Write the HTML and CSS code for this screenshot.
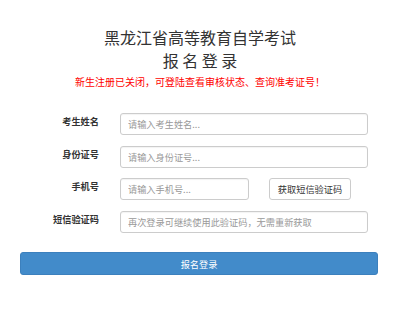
FILE: index.html
```html
<!DOCTYPE html>
<html lang="zh-CN">
<head>
<meta charset="utf-8">
<title>报名登录</title>
<link rel="stylesheet" href="styles.css">
</head>
<body>
<div class="page">
  <header class="head">
    <h1 class="title">黑龙江省高等教育自学考试</h1>
    <h2 class="subtitle">报名登录</h2>
    <p class="notice">新生注册已关闭，可登陆查看审核状态、查询准考证号！</p>
  </header>
  <form class="form">
    <div class="row">
      <label class="label">考生姓名</label>
      <input class="input" type="text" placeholder="请输入考生姓名...">
    </div>
    <div class="row">
      <label class="label">身份证号</label>
      <input class="input" type="text" placeholder="请输入身份证号...">
    </div>
    <div class="row">
      <label class="label">手机号</label>
      <div class="inline">
        <input class="input input-short" type="text" placeholder="请输入手机号...">
        <button class="btn-code" type="button">获取短信验证码</button>
      </div>
    </div>
    <div class="row">
      <label class="label">短信验证码</label>
      <input class="input" type="text" placeholder="再次登录可继续使用此验证码，无需重新获取">
    </div>
    <button class="btn-submit" type="button">报名登录</button>
  </form>
</div>
</body>
</html>
```
FILE: styles.css
```css
* { box-sizing: border-box; }
html, body { margin: 0; padding: 0; background: #fff; }
body {
  font-family: "Noto Sans CJK SC", "Noto Sans", "Liberation Sans", sans-serif;
  color: #333;
}
.page { width: 400px; }
.head {
  padding-top: 27px;
  text-align: center;
}
.title {
  margin: 0;
  font-size: 16px;
  line-height: 20px;
  font-weight: normal;
  color: #333;
}
.subtitle {
  margin: 3px 0 0;
  font-size: 16px;
  line-height: 20px;
  font-weight: normal;
  letter-spacing: 3.5px;
  padding-left: 3.5px;
  color: #333;
}
.notice {
  margin: 5px 0 0;
  font-size: 10px;
  line-height: 14px;
  color: #ff0000;
}
.form {
  margin-top: 24px;
  display: flex;
  flex-direction: column;
  gap: 10.6px;
}
.row {
  display: grid;
  grid-template-columns: 99px 248px;
  column-gap: 21px;
  align-items: start;
}
.label {
  text-align: right;
  font-size: 9.2px;
  line-height: 12px;
  padding-top: 2px;
  font-weight: bold;
  color: #333;
}
.input {
  height: 22px;
  width: 248px;
  border: 1px solid #ccc;
  border-radius: 3px;
  padding: 0 7px;
  font-family: inherit;
  font-size: 9.2px;
  color: #555;
  outline: none;
  box-shadow: inset 0 1px 1px rgba(0,0,0,0.05);
}
.input::placeholder { color: #999; }
.inline {
  display: flex;
  gap: 20px;
}
.input-short { width: 129px; }
.btn-code {
  height: 22px;
  width: 82px;
  border: 1px solid #ccc;
  border-radius: 3px;
  background: #fff;
  font-family: inherit;
  font-size: 9.2px;
  color: #333;
  padding: 0;
}
.btn-submit {
  margin: 8.8px 0 0 20px;
  width: 358px;
  height: 23px;
  border: 1px solid #3c80bd;
  border-radius: 3px;
  background: #428bca;
  color: #fff;
  font-family: inherit;
  font-size: 9.2px;
  padding: 0;
}
```
